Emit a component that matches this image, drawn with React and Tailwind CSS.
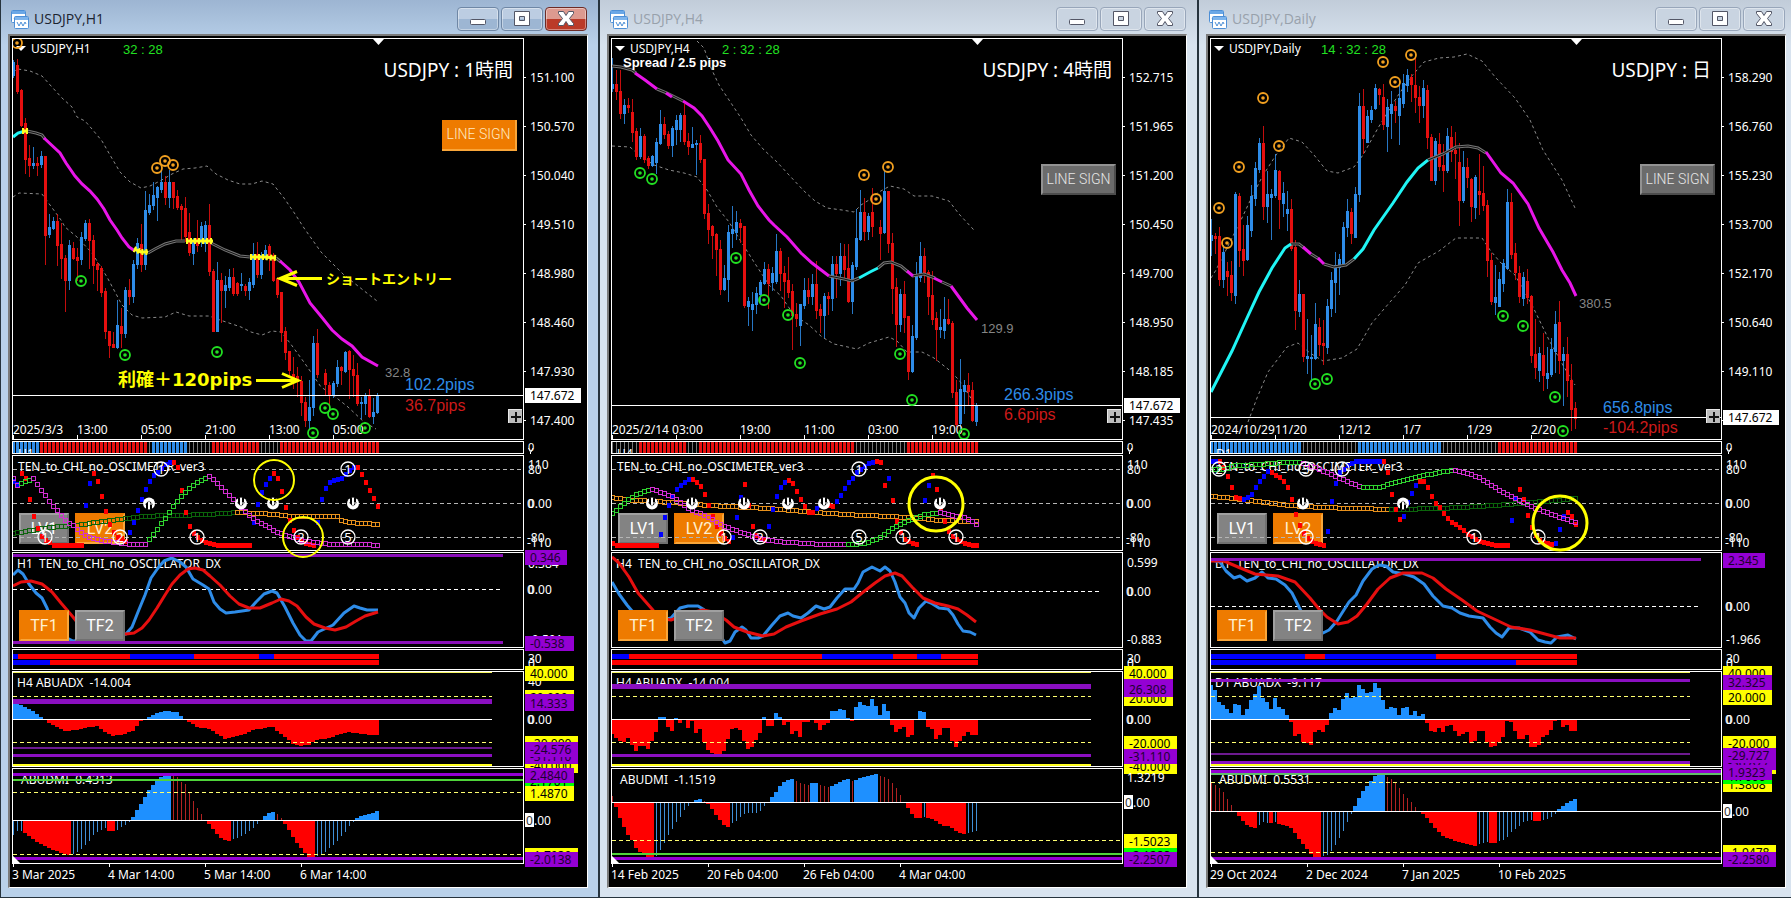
const BLUE = "#2e8ce8";
const RED = "#e60f0f";
const PURPLE = "#9400d3";
const YELLOW = "#ffff00";

const windows = [
  {
    id: "h1",
    title: "USDJPY,H1",
    active: true,
    timer: "32 : 28",
    label: "USDJPY : 1時間",
    tf: "H1",
    prices: ["151.100", "150.570", "150.040", "149.510", "148.980", "148.460", "147.930", "147.400"],
    priceY: 396,
    dates: ["2025/3/3", "13:00", "05:00", "21:00", "13:00", "05:00"],
    days: ["3 Mar 2025", "4 Mar 14:00", "5 Mar 14:00", "6 Mar 14:00"],
    ma: { text: "32.8", x: 385, y: 377 },
    pips: [
      { text: "102.2pips", y: 390 },
      { text: "36.7pips", y: 411 },
    ],
    candles: `B60,62,75,77 R59,65,91,93 R89,90,125,126 R118,123,159,173 R145,158,165,176 B147,163,165,168 R157,163,165,175 B151,156,164,167 R156,156,235,264 B214,227,234,237
      B217,221,228,229 R214,221,245,265 R223,244,258,278 R255,258,280,311 B240,245,280,289 R242,248,258,259 R248,257,260,280 B232,237,259,264 B220,223,238,240 R219,223,240,268
      R235,240,265,283 R262,264,269,290 R266,268,292,296 R288,291,331,338 R331,331,345,357 R332,344,347,347 B300,325,347,348 R308,326,333,347 B287,290,333,337 R279,290,296,304
      B260,264,296,302 B238,243,264,268 R224,244,264,271 B191,210,264,269 B194,205,212,214 B182,195,205,209 B186,187,197,220 B170,182,189,192 R176,182,197,204 B170,182,197,207
      R182,182,197,208 R190,196,207,209 R204,206,209,240 R197,208,236,241 R213,232,252,255 B238,240,253,264 R220,238,245,251 B222,226,240,246 B221,225,243,251 R204,225,271,275
      R269,271,331,331 B262,280,331,331 R273,280,290,322 B276,285,290,307 B269,277,287,290 R268,277,293,295 R282,283,293,295 B273,284,285,290 R284,286,290,295 B278,282,290,299
      B243,254,284,287 R242,254,274,277 B252,255,274,278 B245,250,257,259 R244,246,257,270 R253,255,280,281 R277,279,294,297 R292,292,332,341 R327,331,352,359 R351,351,370,377
      R357,374,382,388 R367,376,381,396 R376,381,402,415 R397,402,420,426 B380,407,420,428 B336,343,407,415 R329,343,374,377 - R369,373,384,395 R382,385,395,404
      B381,383,395,397 B360,367,383,386 R366,367,370,384 B351,352,371,372 R350,351,369,398 R355,369,375,396 R363,375,403,405 B397,402,403,418 B393,395,403,414 R389,395,416,417
      B398,412,416,423 B393,396,412,413`,
    trend: [
      ["gray", "27,131 36,133 42,135 45,139"],
      ["gray", "148,253 155,249 165,244 176,241 185,241"],
      ["gray", "211,243 225,250 240,256 250,257"],
      ["gray", "276,258 281,262"],
      ["cyan", "13,137 18,133 25,131"],
      ["magenta", "44,138 60,153 66,163 75,176 82,184 90,191 97,199 104,209 110,220 117,230 122,238 129,247 135,251"],
      ["magenta", "280,261 290,270 299,282 310,303 320,315 332,330 342,339 352,346 362,357 378,366"],
      ["spark", "22,131 28,131"],
      ["spark", "134,249 141,252 148,252"],
      ["spark", "186,241 199,241 213,241"],
      ["spark", "250,257 264,257 276,258"],
    ],
    bands: [
      "13,72 18,69 30,71 42,76 52,87 62,98 72,107 77,117 85,121 92,129 102,141 110,155 120,172 130,182 141,188 150,186 160,181 172,174 183,169 195,168 207,166 216,174 228,180 240,184 252,184 262,181 273,184 284,198 295,214 304,228 321,252 344,275 377,301",
      "13,197 19,193 42,194 50,205 61,220 65,227 77,237 92,253 107,277 122,305 132,315 142,318 165,317 176,312 189,316 209,316 220,320 241,327 251,332 262,335 272,331 281,332 290,343 306,365 321,387 333,395 348,407 364,422 376,429",
    ],
    sell: [[17, 43], [157, 168], [165, 161], [173, 165]],
    buy: [[81, 281], [125, 355], [217, 352], [313, 433], [325, 408], [333, 414], [365, 428]],
    strip: [[0, "b"], [7, "r"], [34, "g"], [35, "b"], [44, "g"], [50, "r"], [62, "g"], [67, "r"]],
    dots: `B481 B484 R473 R478 R499 R516 R528 R536 R540 R542 R545 R545 R545 R545 R545 R545 R545 R545 B505 B483
      R473 R481 R496 R511 R524 R532 R537 R538 R541 B532 B522 B510 B499 B489 B481 B475 B472 B468 B464 B462
      R462 R467 R490 R512 R526 R533 R537 R540 R542 R543 R544 R545 R545 R545 R545 R545 R545 R545 R545 R545
      B522 B504 B492 B484 B478 R473 R478 R491 R507 R520 R530 R537 R541 R543 R544 R545 B522 B499 B488 B482
      B480 B479 B478 B474 B470 B467 R467 R474 R482 R490 R498 R506`,
    fast: {
      keys: [[0, 478], [1, 485], [2, 483], [5, 478], [6, 484], [8, 495], [10, 506], [11, 510], [13, 520], [15, 525], [17, 532], [19, 537], [22, 540], [26, 542], [30, 544], [33, 544], [34, 539], [35, 534], [37, 523], [39, 512], [40, 506], [42, 496], [44, 488], [46, 482], [48, 478], [49, 476], [50, 479], [52, 487], [54, 495], [56, 503], [58, 511], [60, 518], [62, 523], [64, 527], [66, 532], [69, 536], [72, 540], [76, 542], [80, 544], [88, 544], [91, 545]],
      runs: [[0, "#d42fd4"], [2, "#2fd42f"], [5, "#d42fd4"], [34, "#2fd42f"], [49, "#d42fd4"]],
    },
    slow: {
      keys: [[0, 533], [6, 529], [11, 526], [16, 525], [22, 521], [28, 518], [32, 516], [39, 515], [49, 514], [56, 512], [66, 514], [67, 515], [71, 516], [81, 516], [82, 520], [84, 522], [88, 523], [91, 524]],
      runs: [[0, "#0b640b"], [56, "#e8911c"]],
    },
    digits: [["1", 161, 469], ["1", 348, 469], ["1", 45, 537], ["2", 120, 537], ["1", 197, 537], ["2", 301, 537], ["5", 348, 537]],
    arrows: [[149, 503, true], [241, 503], [273, 503], [353, 503]],
    rings: [[274, 480, 20, 2], [303, 537, 20, 2]],
    dx: {
      zero: 589,
      lines: [555, 642],
      blue: "13,575 18,570 23,574 29,584 36,593 42,598 47,608 52,622 57,633 73,641 96,639 126,634 132,627 138,612 145,595 151,578 158,568 164,561 172,558 180,562 186,567 193,579 203,585 209,589 214,602 220,609 226,613 235,612 249,610 256,602 264,594 272,591 277,593 285,607 293,623 300,635 306,641 311,641 318,632 333,625 344,613 354,606 360,608 367,610 378,610",
      red: "13,586 21,582 31,581 42,584 52,592 61,603 73,617 77,622 100,632 126,634 134,633 142,628 149,620 157,608 165,595 172,584 180,575 188,569 195,568 203,570 210,576 220,585 230,596 239,604 249,608 260,608 272,603 281,599 289,601 297,606 306,617 314,624 325,628 335,630 346,627 356,621 365,616 378,612",
    },
    bars1: [[13, 18, 130, 194, 259, 274, 379], "brbrbr"],
    bars2: [[13, 50, 379], "br"],
    adx: {
      text: "H4 ABUADX  -14.004",
      lines: [[701, 5], [748, 2], [755, 3]],
      keys: [[0, 15], [1, 15], [2, 14], [3, 12], [4, 10], [5, 8], [6, 5], [7, 2], [8, -1], [9, -4], [11, -8], [13, -12], [16, -11], [18, -9], [21, -7], [23, -13], [25, -17], [28, -15], [30, -12], [32, -2], [33, 0], [34, 2], [36, 6], [38, 8], [41, 7], [42, 3], [43, 0], [44, -3], [46, -8], [49, -10], [51, -15], [53, -20], [55, -18], [58, -15], [60, -11], [63, -9], [65, -8], [66, -12], [68, -18], [70, -25], [72, -27], [74, -26], [76, -21], [79, -19], [82, -15], [84, -13], [87, -15], [90, -16], [91, -16]],
    },
    dmi: {
      text: "ABUDMI  0.4313",
      zero: 820,
      lines: [[774, 3, PURPLE], [780, 2, "#4fd43a"], [858, 3, PURPLE]],
      dashed: [792, 854],
      runs: [
        ["downFade", [-15, -11, -11]],
        ["down", [-13, -16, -19, -22, -24, -26, -28, -30, -31, -33, -34, -35]],
        ["downFade", [-34, -32, -29, -25, -21, -15, -12, -10, -8]],
        ["down", [-11, -11]],
        ["downFade", [-10, -7, -5, -2]],
        ["up", [3, 10, 16, 23, 30, 35, 40, 43, 44, 45]],
        ["upFade", [45, 43, 38, 36, 27, 19, 12, 6, 0]],
        ["down", [-4, -9, -14, -18, -20, -21]],
        ["downFade", [-19, -18, -16, -14, -11, -8, -4, -1]],
        ["up", [4, 7, 8]],
        ["upFade", [6, 2]],
        ["down", [-4, -10, -17, -23, -28, -33, -37, -37]],
        ["downFade", [-36, -34, -32, -28, -25, -21, -16, -12, -6, -2]],
        ["up", [2, 4, 5, 6, 7, 9]],
      ],
    },
    axis: [
      ["plain", "0.384", 563],
      ["plain", "-0.591", 639],
      ["purple", "0.346", 557],
      ["purple", "-0.538", 643],
      ["plain", "0.00", 589],
      ["plain", "40", 681],
      ["yellow", "40.000", 673],
      ["yellow", "20.000", 697],
      ["purple", "16.000", 701],
      ["purple", "14.333", 703],
      ["plain", "0.00", 719],
      ["yellow", "-20.000", 743],
      ["yellow", "-40.000", 765],
      ["purple", "-31.110", 756],
      ["purple", "-24.576", 749],
      ["green", "2.1701", 781],
      ["purple", "2.4840", 775],
      ["yellow", "1.4870", 793],
      ["yellow", "-1.7039", 855],
      ["purple", "-2.0138", 859],
    ],
  },
  {
    id: "h4",
    title: "USDJPY,H4",
    timer: "2 : 32 : 28",
    spread: "Spread / 2.5 pips",
    label: "USDJPY : 4時間",
    tf: "H4",
    prices: ["152.715", "151.965", "151.200", "150.450", "149.700", "148.950", "148.185", "147.435"],
    priceY: 406,
    dates: ["2025/2/14 03:00", "", "19:00", "11:00", "03:00", "19:00"],
    days: ["14 Feb 2025", "20 Feb 04:00", "26 Feb 04:00", "4 Mar 04:00"],
    ma: { text: "129.9", x: 382, y: 333 },
    pips: [
      { text: "266.3pips", y: 400 },
      { text: "6.6pips", y: 420 },
    ],
    candles: `B58,84,88,91 R70,84,91,99 R70,91,113,118 B99,105,113,123 R98,105,107,112 R99,112,132,141 R128,131,156,159 B128,136,156,158 R134,136,159,162 R156,158,165,168
      B155,156,165,166 B138,142,162,173 B110,124,143,144 R117,124,134,138 R131,134,145,148 B126,128,145,156 B115,120,129,144 B113,115,129,141 R104,115,141,144 R133,141,146,154
      B127,144,147,147 B140,143,144,174 R135,143,159,162 R159,159,213,218 R204,213,229,243 R225,226,235,258 R233,234,249,275 R240,249,289,294 B265,278,289,290 B225,232,279,301
      B206,229,233,247 B211,222,232,239 R219,223,227,242 R226,226,305,307 B297,301,306,325 B292,304,309,330 B287,293,304,313 B280,282,294,302 B262,269,283,284 R264,269,283,308
      B267,273,282,290 B234,251,281,283 R248,251,273,290 R266,273,281,307 R257,280,292,297 R284,291,315,349 R303,314,318,326 B304,304,325,345 B278,290,305,308 R278,290,296,303
      B274,284,296,304 R261,284,310,318 R304,309,315,332 B293,296,315,337 R292,296,298,314 B256,264,298,310 R256,264,273,297 B243,256,273,285 R244,256,269,279 R244,268,301,302
      B262,265,301,313 B209,238,266,269 B190,212,239,240 R198,212,231,240 B213,216,231,239 R188,212,226,236 - R220,227,233,259 B171,191,232,233 R191,191,243,252
      R233,243,288,313 R278,287,324,346 B289,294,324,331 R281,294,317,332 R316,316,371,379 B325,336,371,372 B262,275,337,339 B242,256,277,281 R248,256,273,282 R270,272,296,314
      R271,295,319,324 R312,318,329,360 B309,327,329,337 B297,319,330,338 R299,319,323,324 R321,323,392,397 R380,392,424,426 B359,389,423,428 B380,385,391,413 R373,385,391,405
      R382,390,420,421 B403,405,421,425`,
    trend: [
      ["gray", "13,66 22,67 33,70 37,73"],
      ["gray", "58,89 68,93 84,101"],
      ["gray", "230,276 245,279 253,281 260,278"],
      ["gray", "279,268 285,263 292,262 302,266 309,272"],
      ["gray", "313,276 325,274 336,278"],
      ["gray", "343,282 352,286"],
      ["cyan", "260,278 271,272 279,268"],
      ["magenta", "36,73 46,80 58,89"],
      ["magenta", "67,93 73,97"],
      ["magenta", "84,101 95,108 103,116 111,128 119,141 129,160 142,174 150,190 159,206 170,220 175,225 188,237 202,253 213,263 230,276"],
      ["magenta", "308,271 314,276"],
      ["magenta", "335,278 343,282"],
      ["magenta", "352,286 360,297 368,308 378,320"],
    ],
    bands: [
      "98,41 105,48 112,68 120,85 130,100 142,118 152,135 165,150 178,162 190,175 205,191 216,201 228,208 243,210 255,212 262,205 270,200 280,192 291,186 305,189 315,196 333,196 350,201 360,214 374,229 376,232",
      "13,146 31,147 40,155 55,165 70,170 85,173 98,177 108,190 118,207 130,222 141,240 155,262 170,285 182,296 195,315 210,325 223,337 235,344 258,349 270,343 280,340 290,337 298,341 308,352 323,352 335,358 349,369 360,380 370,395 376,405",
    ],
    sell: [[265, 175], [277, 199], [289, 167]],
    buy: [[41, 173], [53, 179], [137, 258], [165, 300], [189, 315], [201, 363], [301, 354], [313, 400], [365, 434]],
    strip: [[0, "g"], [7, "r"], [19, "g"], [22, "r"], [61, "g"], [74, "r"]],
    dots: `R543 R545 R545 R545 R545 R545 R545 R545 R545 R545 R545 R545 B534 B517 B505 B496 B489 B485 B482 B479
      R479 R482 R486 R494 R505 R516 R526 R533 R538 R541 B537 B517 B497 R484 R505 R526 R535 R538 R540 B526
      B509 B496 B487 B482 R480 R483 R491 R499 R506 R512 R512 B508 B505 R504 R505 R506 B501 B495 B488 B482
      B478 B472 B469 B466 B463 B462 R461 R462 R485 B478 R500 R521 R532 R539 R541 R543 R544 - B500 B485
      R475 R489 R508 R521 R531 R536 R539 R541 R543 R544 R545 R545`,
    fast: {
      keys: [[0, 513], [2, 506], [4, 499], [6, 494], [9, 490], [10, 489], [15, 496], [19, 508], [23, 515], [28, 526], [33, 533], [37, 538], [41, 541], [48, 543], [54, 544], [59, 544], [63, 543], [67, 537], [70, 528], [74, 520], [78, 514], [81, 513], [82, 512], [85, 515], [88, 517], [90, 521], [91, 524]],
      runs: [[0, "#2fd42f"], [10, "#d42fd4"], [59, "#2fd42f"], [82, "#d42fd4"]],
    },
    slow: {
      keys: [[0, 497], [6, 500], [15, 502], [21, 504], [29, 506], [39, 508], [48, 511], [58, 514], [69, 516], [78, 518], [82, 520], [91, 521]],
      runs: [[0, "#e8911c"]],
    },
    digits: [["1", 260, 469], ["1", 125, 537], ["2", 161, 537], ["5", 260, 537], ["1", 304, 537], ["1", 357, 537]],
    arrows: [[53, 503], [93, 503], [145, 503], [189, 503], [225, 503], [341, 503]],
    rings: [[337, 504, 27, 3]],
    dx: {
      zero: 591,
      lines: [],
      blue: "13,582 20,594 28,605 33,611 41,618 56,622 72,618 81,608 89,606 99,606 104,609 114,617 121,635 126,643 131,641 136,632 143,627 147,630 152,638 159,638 164,636 173,625 181,616 189,613 194,616 202,618 209,613 217,606 225,609 231,607 238,598 246,589 255,589 259,583 264,572 273,567 281,571 286,567 291,571 296,582 301,597 306,603 310,613 315,618 320,608 327,601 332,603 340,608 349,609 354,615 359,624 364,631 371,632 377,635",
      red: "13,557 20,563 30,577 39,593 53,609 60,618 72,620 91,613 104,610 114,612 127,620 135,627 148,632 164,636 175,634 187,627 202,621 221,614 238,609 252,602 263,593 276,583 286,576 296,573 303,576 313,587 324,598 336,603 349,606 359,609 368,615 377,622",
    },
    bars1: [[13, 30, 223, 294, 318, 342, 379], "brbrbr"],
    bars2: [[13, 379], "r"],
    adx: {
      text: "H4 ABUADX  -14.004",
      lines: [[686, 5], [755, 3]],
      values: [-15, -19, -22, -23, -19, -26, -32, -27, -27, -30, -22, -13, 2, 2, -8, -12, 1, -4, 0, -9, -2, -14, -10, -23, -31, -34, -35, -35, -32, -20, -10, -9, -11, -22, -30, -28, -21, -14, 2, -7, -7, 6, 2, -6, -3, -15, -12, -18, -3, -3, -1, -4, -11, -6, -4, 8, 8, 10, 9, 1, -2, 12, 17, 14, 13, 20, 13, 4, 15, 8, -6, -13, -10, -8, -18, -16, 0, 8, 7, -8, -10, -20, -16, -9, -9, -22, -28, -22, -17, -13, -16, -16],
    },
    dmi: {
      text: "ABUDMI  -1.1519",
      zero: 802,
      lines: [[854, 2, "#4fd43a"], [858, 3, PURPLE]],
      dashed: [840],
      runs: [
        ["upFade", [6]],
        ["down", [-5, -16, -25, -33, -38, -46, -50, -53, -55, -55]],
        ["downFade", [-54, -48, -41, -33, -27, -20, -15, -8, -4]],
        ["up", [0, 2, 3]],
        ["upFade", [1]],
        ["down", [-2, -7, -13, -18, -23, -25]],
        ["downFade", [-21, -19, -15, -12, -11, -11, -11, -9, -4]],
        ["up", [0, 5, 10, 16, 20, 22, 23]],
        ["upFade", [21, 19, 18, 17]],
        ["up", [19, 19]],
        ["upFade", [17, 16, 15]],
        ["up", [16, 18, 20, 22, 23]],
        ["upFade", [21]],
        ["up", [22, 24, 25, 26, 27, 28]],
        ["upFade", [26, 25, 23, 19, 14, 7]],
        ["down", [-1, -6, -12, -16, -16]],
        ["downFade", [-15]],
        ["down", [-16, -17, -19, -22, -24, -24, -26, -29, -31, -32]],
        ["downFade", [-31, -30, -29]],
      ],
    },
    axis: [
      ["plain", "0.599", 562],
      ["plain", "0.00", 591],
      ["plain", "-0.883", 639],
      ["yellow", "40.000", 673],
      ["yellow", "20.000", 698],
      ["purple", "28.000", 686],
      ["purple", "26.308", 689],
      ["plain", "0.00", 719],
      ["yellow", "-20.000", 743],
      ["yellow", "-40.000", 766],
      ["purple", "-31.110", 756],
      ["plain", "1.3219", 777],
      ["yellow", "-1.5023", 841],
      ["green", "-2.1288", 855],
      ["purple", "-2.2507", 859],
    ],
  },
  {
    id: "d1",
    title: "USDJPY,Daily",
    timer: "14 : 32 : 28",
    label: "USDJPY : 日",
    tf: "D1",
    prices: ["158.290", "156.760", "155.230", "153.700", "152.170", "150.640", "149.110", "147.580"],
    priceY: 418,
    dates: ["2024/10/29", "11/20", "12/12", "1/7", "1/29", "2/20"],
    days: ["29 Oct 2024", "2 Dec 2024", "7 Jan 2025", "10 Feb 2025"],
    ma: { text: "380.5", x: 381, y: 308 },
    pips: [
      { text: "656.8pips", y: 413 },
      { text: "-104.2pips", y: 433 },
    ],
    candles: `B219,235,240,255 R233,236,238,253 R227,236,279,285 B245,252,279,287 R262,271,276,295 R261,275,292,300 B192,194,295,303 R193,196,250,266 R225,249,260,275 B216,225,259,260
      B185,196,230,236 B162,168,198,205 B138,143,169,172 R126,143,206,219 B171,194,206,222 B189,194,197,239 B154,170,195,197 R170,171,199,228 B182,193,203,216 B191,209,213,230
      R199,209,248,250 R240,247,310,329 B280,294,311,316 R294,294,356,361 B319,356,358,373 B335,357,358,381 B303,324,358,359 R318,327,344,355 R320,343,345,364 B299,306,347,353
      B272,280,308,316 B252,265,282,312 B254,259,267,294 B222,227,263,265 B199,211,227,236 R208,212,233,243 B187,194,237,237 B93,106,194,201 R89,106,138,153 B110,116,142,142
      B106,110,119,122 B84,88,108,109 R88,89,94,104 R84,97,124,129 B99,107,126,151 B91,104,113,138 R101,106,110,122 B85,98,115,144 B74,83,103,107 B69,75,85,91
      R74,77,84,101 R57,85,97,112 R86,97,105,122 B80,88,105,117 R85,90,137,148 R134,137,180,180 B138,141,180,184 R133,144,166,170 R144,165,170,191 B128,136,170,172
      R126,137,151,161 R132,150,153,178 R143,162,200,225 B151,167,200,202 R158,167,177,187 R178,179,206,221 B175,177,207,218 R154,191,194,214 R166,193,205,210 R200,205,260,276
      R253,260,301,304 B265,297,302,314 B272,279,306,306 B259,263,283,291 B189,202,268,269 R193,202,254,258 R243,253,272,279 R266,273,296,302 B272,277,298,305 R269,281,297,303
      R295,296,355,362 R319,354,367,378 B347,353,370,381 R333,355,375,390 B347,373,378,388 B338,349,374,376 B311,324,351,372 R301,322,360,373 B347,354,360,405 R337,354,380,396
      R364,380,409,430 R402,408,418,428`,
    trend: [
      ["gray", "93,244 101,244 106,248"],
      ["gray", "113,254 121,259"],
      ["gray", "126,264 136,267 148,265 156,259"],
      ["gray", "230,160 245,154 258,147 270,146 280,148 288,153"],
      ["cyan", "13,392 34,351 49,318 61,292 74,268 87,248 93,244"],
      ["cyan", "156,259 165,249 176,230 195,203 209,182 220,168 230,160"],
      ["magenta", "105,247 113,254"],
      ["magenta", "120,258 126,264"],
      ["magenta", "288,152 303,173 315,183 330,204 341,228 355,252 364,270 372,283 378,296"],
    ],
    bands: [
      "13,278 18,270 43,220 51,203 64,177 78,155 91,138 104,142 116,155 129,171 140,173 156,167 165,155 180,128 199,97 212,78 226,62 241,58 256,57 269,54 284,61 298,78 317,98 332,120 345,150 364,180 377,208",
      "50,422 59,398 70,372 89,347 100,343 112,353 125,361 144,358 159,349 174,323 192,302 207,285 220,263 241,251 258,238 284,238 292,250 302,262 317,275 334,305 351,340 366,367 377,385",
    ],
    sell: [[21, 208], [41, 167], [65, 98], [81, 146], [185, 62], [197, 82], [213, 55], [29, 243]],
    buy: [[117, 384], [129, 379], [305, 316], [325, 326], [357, 397], [365, 431]],
    strip: [[0, "b"], [23, "g"], [37, "b"], [58, "g"], [72, "r"]],
    dots: `B461 B461 R461 R467 R476 R487 R497 R498 B499 B497 B494 B487 B481 B476 B471 R472 R475 R477 R481 R487
      R499 R514 R525 R533 R538 R541 R543 R544 R545 B531 B501 B483 B472 B469 B465 B463 B461 B461 B461 B461
      B461 B461 B461 R461 R472 R494 R509 R519 B516 B502 B493 B485 R481 R481 R487 R496 R503 R507 R513 R518
      R522 R524 R527 R530 R534 R536 R539 R541 R542 R543 R544 R545 R545 R545 R545 B520 B498 R489 R499 R515
      R527 R535 R540 R542 R543 R544 B543 B529 B516 R512 R516 R524`,
    fast: {
      keys: [[0, 469], [3, 469], [6, 465], [12, 464], [18, 462], [22, 462], [23, 463], [26, 467], [30, 474], [34, 481], [38, 487], [42, 487], [44, 484], [48, 480], [53, 475], [57, 472], [60, 470], [61, 470], [64, 473], [67, 477], [70, 485], [74, 494], [79, 504], [83, 511], [88, 518], [91, 522]],
      runs: [[0, "#2fd42f"], [23, "#d42fd4"], [38, "#2fd42f"], [61, "#d42fd4"]],
    },
    slow: {
      keys: [[0, 496], [6, 498], [14, 502], [20, 505], [27, 507], [37, 508], [44, 509], [45, 509], [57, 508], [67, 506], [77, 503], [83, 501], [91, 498]],
      runs: [[0, "#e8911c"], [45, "#0b640b"]],
    },
    digits: [["2", 21, 469], ["5", 108, 469], ["1", 144, 469], ["1", 108, 537], ["1", 276, 537], ["1", 340, 537]],
    arrows: [[105, 503], [205, 503, true]],
    rings: [[362, 523, 27, 3]],
    dx: {
      zero: 606,
      lines: [559],
      blue: "13,560 22,562 28,571 36,578 42,576 49,581 57,578 64,572 70,578 78,579 87,585 94,593 100,605 104,613 112,627 125,633 131,630 139,621 144,613 151,602 158,595 165,581 174,569 181,565 188,566 195,572 207,574 216,577 226,584 235,596 245,606 254,608 262,613 271,616 285,618 292,627 298,633 304,637 311,628 321,628 332,632 340,640 347,642 353,643 359,637 370,635 378,639",
      red: "13,561 26,561 40,567 57,574 80,576 97,582 112,598 121,609 129,617 140,624 150,622 159,616 169,604 180,589 192,578 205,573 224,573 235,578 248,589 264,600 279,611 294,618 313,627 332,630 347,634 362,638 378,638",
    },
    bars1: [[13, 107, 127, 238, 379], "brbr"],
    bars2: [[13, 318, 379], "br"],
    adx: {
      text: "D1 ABUADX  -9.117",
      lines: [[680, 3], [754, 2], [762, 3]],
      values: [34, 29, 17, 14, 10, 6, 15, 14, 4, 10, 19, 25, 33, 21, 17, 10, 21, 12, 10, 4, -3, -17, -15, -23, -24, -26, -13, -11, -13, -6, 6, 11, 9, 20, 26, 21, 22, 34, 30, 26, 27, 36, 31, 19, 10, 12, 11, 4, 11, 12, 4, 8, 3, 5, -4, -12, -13, -9, -13, -7, -6, -12, -17, -15, -13, -24, -22, -12, -12, -23, -28, -27, -23, -18, -2, -3, -12, -20, -20, -16, -28, -28, -26, -18, -16, -11, -2, 0, -8, -6, -12, -12],
    },
    dmi: {
      text: "ABUDMI  0.5531",
      zero: 811,
      lines: [[771, 3, PURPLE], [774, 2, "#5fbf6a"], [858, 3, PURPLE]],
      dashed: [782, 852],
      runs: [
        ["upFade", [29, 26, 23, 19, 12, 6]],
        ["down", [-1, -5, -10, -14, -16, -17]],
        ["downFade", [-14, -11, -12]],
        ["down", [-12]],
        ["downFade", [-11]],
        ["down", [-13, -14, -15, -17, -22, -28, -33, -38, -43, -46, -46]],
        ["downFade", [-45, -44, -40, -34, -27, -20, -11, -3]],
        ["up", [5, 13, 20, 25, 30, 35, 37, 37]],
        ["upFade", [34, 32, 28, 23, 17, 13, 9, 4, 0]],
        ["down", [-3, -7, -12, -17, -21, -25, -27, -28, -30, -31, -32, -33, -34, -35]],
        ["downFade", [-33, -32, -31]],
        ["down", [-32, -32]],
        ["downFade", [-30, -29, -26, -21, -18, -15, -11, -10, -9]],
        ["down", [-10, -10]],
        ["downFade", [-9, -8, -6, -3]],
        ["up", [2, 5, 8, 10, 12]],
      ],
    },
    axis: [
      ["purple", "2.345", 560],
      ["plain", "0.00", 606],
      ["plain", "-1.966", 639],
      ["yellow", "40.000", 673],
      ["purple", "32.325", 682],
      ["yellow", "20.000", 697],
      ["plain", "0.00", 719],
      ["yellow", "-20.000", 743],
      ["yellow", "-40.000", 766],
      ["purple", "-36.877", 762],
      ["purple", "-29.727", 755],
      ["yellow", "1.3808", 784],
      ["green", "1.7000", 776],
      ["purple", "1.9323", 772],
      ["yellow", "-1.9478", 852],
      ["purple", "-2.2580", 859],
    ],
  },
];

const barX = (i) => 13 + 4 * i;

function interpolate(keys) {
  return Array.from({ length: 92 }, (_, i) => {
    const next = keys.findIndex(([k]) => k >= i);
    const [k1, v1] = keys[next];
    if (k1 === i) return v1;
    const [k0, v0] = keys[next - 1];
    return Math.round(v0 + ((v1 - v0) * (i - k0)) / (k1 - k0));
  });
}

const runAt = (runs, i) => runs.filter(([start]) => start <= i).pop()[1];

const parse = (text) =>
  text
    .trim()
    .split(/\s+/)
    .map((t) => (t === "-" ? null : { color: t[0] === "B" ? "up" : "down", v: t.slice(1).split(",").map(Number) }));

// Every panel draws in window coordinates, shifted so its own top edge is `top`.
function Panel({ top, className, under, over, children }) {
  return (
    <div className={`relative border border-white ${className}`}>
      {under}
      <svg className="pointer-events-none absolute inset-0 h-full w-full text-[12px]">
        <g transform={`translate(-13 ${-top - 1})`}>{children}</g>
      </svg>
      {over}
    </div>
  );
}

function HLine({ y, x2 = "120%", color = "#fff", width = 1, dash }) {
  return (
    <line x1="13" x2={x2} y1={width % 2 ? y + 0.5 : y} y2={width % 2 ? y + 0.5 : y} stroke={color} strokeWidth={width} strokeDasharray={dash} />
  );
}

function Target({ x, y, color }) {
  return (
    <g>
      <circle cx={x} cy={y} r="5" fill="none" stroke={color} strokeWidth="1.8" />
      <circle cx={x} cy={y} r="1.8" fill={color} />
    </g>
  );
}

function Trend({ kind, points }) {
  if (kind === "gray")
    return (
      <g fill="none">
        <polyline points={points} stroke="#757575" strokeWidth="3" />
        <polyline points={points} stroke="#111" strokeWidth="1" />
      </g>
    );
  if (kind === "spark")
    return (
      <g fill="none">
        <polyline points={points} stroke="#ffff20" strokeWidth="3" />
        <polyline points={points} stroke="#ffff20" strokeWidth="6" strokeDasharray="2 2" />
      </g>
    );
  return <polyline points={points} fill="none" stroke={kind === "cyan" ? "#20f5f5" : "#e815e8"} strokeWidth="3" />;
}

function PricePanel({ w }) {
  return (
    <Panel
      top={38}
      className="h-[402px]"
      over={
        <>
          <p className="absolute right-2.5 top-[15px] text-[19px] leading-8 text-white">{w.label}</p>
          <button
            className={
              w.active
                ? "absolute right-1.5 top-[81px] h-[31px] w-[75px] border-b-2 border-r-2 border-[#f9a63a] bg-[#ee7b00] font-[Roboto] text-[14px] font-light text-[#ffe9c0]"
                : "absolute right-1.5 top-[125px] h-[31px] w-[75px] border-2 border-b-[#4c4c4c] border-l-[#929292] border-r-[#4c4c4c] border-t-[#929292] bg-[#6b6b6b] font-[Roboto] text-[14px] font-light text-[#e6e6e6]"
            }
          >
            LINE SIGN
          </button>
          <button
            aria-label="Expand"
            className="absolute bottom-4 right-px flex h-3.5 w-3.5 items-center justify-center border-l border-t border-[#e8e8e8] bg-[#bdbdbd]"
          >
            <svg className="h-3 w-3" shapeRendering="crispEdges">
              <path d="M5 1h2v4h4v2H7v4H5V7H1V5h4z" fill="#111" />
            </svg>
          </button>
        </>
      }
    >
      <g fill="none" stroke="#8a8a8a" strokeDasharray="3 3">
        {w.bands.map((b) => (
          <polyline key={b} points={b} />
        ))}
      </g>
      <g shapeRendering="crispEdges">
        {parse(w.candles).map((c, i) => {
          if (!c) return null;
          const [high, top, bottom, low] = c.v;
          return (
            <g key={i} fill={c.color === "up" ? BLUE : RED}>
              <rect x={barX(i)} y={high} width="1" height={low - high + 1} opacity="0.85" />
              <rect x={barX(i) - 1} y={top} width="3" height={bottom - top + 1} />
            </g>
          );
        })}
      </g>
      {w.trend.map(([kind, points]) => (
        <Trend key={points} kind={kind} points={points} />
      ))}
      <HLine y={w.priceY - 1} />
      <g fill="#fff">
        {w.dates.map((d, i) => (
          <g key={i}>
            <rect x={13 + 64 * i} y="435" width="1" height="4" />
            <text x={13 + 64 * i} y="434">
              {d}
            </text>
          </g>
        ))}
        <path d="M16 46h10l-5 5z" />
        <path d="M373 39h11l-5.500 6z" />
        <text x="31" y="53">
          {w.title}
        </text>
      </g>
      {w.sell.map(([x, y]) => (
        <Target key={x} x={x} y={y} color="#f2a020" />
      ))}
      {w.buy.map(([x, y]) => (
        <Target key={x} x={x} y={y} color="#22e022" />
      ))}
      <text x="123" y="54" fill="#22e022" className="font-['Liberation_Sans'] text-[13px]">
        {w.timer}
      </text>
      <g className="font-['Liberation_Sans']">
        {w.spread && (
          <text x="24" y="67" fill="#fff" className="text-[13px] font-bold">
            {w.spread}
          </text>
        )}
        <text x={w.ma.x} y={w.ma.y} fill="#858585" className="text-[13px]">
          {w.ma.text}
        </text>
        <text x="405" y={w.pips[0].y} fill={BLUE} className="text-[16px]">
          {w.pips[0].text}
        </text>
        <text x="405" y={w.pips[1].y} fill="#cc1a1a" className="text-[16px]">
          {w.pips[1].text}
        </text>
      </g>
    </Panel>
  );
}

function StripPanel({ w }) {
  return (
    <Panel top={441} className="h-[13px]">
      <g shapeRendering="crispEdges">
        {Array.from({ length: 92 }, (_, i) => {
          const kind = runAt(w.strip, i);
          if (kind === "g") return <rect key={i} x={barX(i)} y="442" width="1" height="11" fill="#777" />;
          return <rect key={i} x={barX(i) - 1} y="442" width="3" height="11" fill={kind === "b" ? BLUE : RED} />;
        })}
      </g>
      <text x="18" y="458" fill="#fff">
        {w.tf}
      </text>
    </Panel>
  );
}

function HollowSeries({ keys, runs }) {
  return (
    <g fill="none" strokeWidth="1" shapeRendering="crispEdges">
      {interpolate(keys).map((y, i) => (
        <rect key={i} x={barX(i) - 1.5} y={y - 1.5} width="4" height="4" stroke={runAt(runs, i)} />
      ))}
    </g>
  );
}

function ToggleButton({ on, className, children }) {
  return (
    <button
      className={`absolute h-[31px] w-[50px] border-2 font-[Roboto] text-[16px] leading-none ${
        on
          ? "border-b-[#f9a63a] border-l-[#ee7b00] border-r-[#f9a63a] border-t-[#ee7b00] bg-[#ee7b00] text-[#fff0d0]"
          : "border-b-[#707070] border-l-[#a0a0a0] border-r-[#707070] border-t-[#a0a0a0] bg-[#838383] text-white"
      } ${className}`}
    >
      {children}
    </button>
  );
}

function MeterPanel({ w }) {
  return (
    <Panel
      top={455}
      className="h-24"
      under={
        <>
          <ToggleButton className="bottom-1.5 left-1.5">LV1</ToggleButton>
          <ToggleButton on className="bottom-1.5 left-[62px]">
            LV2
          </ToggleButton>
        </>
      }
    >
      <HLine y={469} color="#b5b5b5" dash="4 3" />
      <HLine y={503} color="#b5b5b5" dash="4 3" />
      <HLine y={537} color="#b5b5b5" dash="4 3" />
      <text x="18" y="471" fill="#fff">
        TEN_to_CHI_no_OSCIMETER_ver3
      </text>
      <HollowSeries {...w.slow} />
      <g shapeRendering="crispEdges">
        {parse(w.dots).map(
          (d, i) => d && <rect key={i} x={barX(i) - 1} y={d.v[0] - 2} width="4" height="5" fill={d.color === "up" ? "#0000ff" : "#ff0000"} />
        )}
      </g>
      <HollowSeries {...w.fast} />
      {w.digits.map(([n, x, y]) => (
        <g key={`${x}-${y}`}>
          <circle cx={x} cy={y} r="7" fill="none" stroke="#fff" strokeWidth="1.3" />
          <text x={x} y={y + 5} fill="#fff" textAnchor="middle" className="text-[13px]">
            {n}
          </text>
        </g>
      ))}
      {w.arrows.map(([x, y, up]) => (
        <g key={x} transform={`translate(${x} ${y + 0.5}) scale(1 ${up ? -1 : 1})`}>
          <circle r="6" fill="#fff" />
          <path d="M-3 -6h2v6h-2zM1 -6h2v6h-2zM-4 -1h3v2l1 2zM4 -1h-3v2l-1 2z" fill="#000" />
        </g>
      ))}
    </Panel>
  );
}

function OscillatorPanel({ w }) {
  return (
    <Panel
      top={552}
      className="h-24"
      over={
        <>
          <ToggleButton on className="bottom-1.5 left-1.5">
            TF1
          </ToggleButton>
          <ToggleButton className="bottom-1.5 left-[62px]">TF2</ToggleButton>
        </>
      }
    >
      <text x="17" y="568" fill="#fff" className="whitespace-pre">
        {w.tf + "  TEN_to_CHI_no_OSCILLATOR_DX"}
      </text>
      <HLine y={w.dx.zero} x2="503" dash="4 3" />
      <g fill="none" strokeWidth="3" strokeLinejoin="round">
        <polyline points={w.dx.blue} stroke={BLUE} />
        <polyline points={w.dx.red} stroke={RED} />
      </g>
      {w.dx.lines.map((y) => (
        <HLine key={y} y={y} x2="503" color="#8a0fb8" width={3} />
      ))}
    </Panel>
  );
}

function TrendBars({ data: [edges, colors], y }) {
  return colors.split("").map((c, i) => (
    <rect key={i} x={edges[i]} y={y} width={edges[i + 1] - edges[i]} height="5" fill={c === "b" ? "#0000ff" : "#ff0000"} />
  ));
}

function BarsPanel({ w }) {
  return (
    <Panel top={649} className="h-[21px]">
      <g shapeRendering="crispEdges">
        <TrendBars data={w.bars1} y={654} />
        <TrendBars data={w.bars2} y={660} />
      </g>
    </Panel>
  );
}

function AdxPanel({ w }) {
  const values = w.adx.values ?? interpolate(w.adx.keys);
  return (
    <Panel top={671} className="h-24">
      <text x="17" y="687" fill="#fff" className="whitespace-pre">
        {w.adx.text}
      </text>
      <g shapeRendering="crispEdges">
        {values.map((h, i) => (
          <rect key={i} x={barX(i) - 2} y={h > 0 ? 719 - h : 719} width="4" height={Math.abs(h)} fill={h > 0 ? "#1e90ff" : "#ff0000"} />
        ))}
      </g>
      <HLine y={696} x2="492" color="#ffff70" dash="4 3" />
      <HLine y={742} x2="492" color="#ffff70" dash="4 3" />
      <HLine y={719} x2="492" />
      <HLine y={672} x2="492" color="#f5f560" width={2} />
      <HLine y={765} x2="492" color="#ffff20" width={2} />
      {w.adx.lines.map(([y, width]) => (
        <HLine key={y} y={y} x2="492" color={width === 2 ? "#6d1a90" : "#8a0fc0"} width={width} />
      ))}
    </Panel>
  );
}

const histogramStyle = {
  up: { width: 4, offset: -2, fill: "#1e90ff" },
  down: { width: 4, offset: -2, fill: "#ff0000" },
  upFade: { width: 1, offset: 0, fill: "#b02222" },
  downFade: { width: 1, offset: 0, fill: "#3f8fd8" },
};

function DmiPanel({ w }) {
  const bars = w.dmi.runs.flatMap(([kind, values]) => values.map((h) => ({ h, ...histogramStyle[kind] })));
  return (
    <Panel top={768} className="h-24">
      <text x="21" y="784" fill="#fff" className="whitespace-pre">
        {w.dmi.text}
      </text>
      <g shapeRendering="crispEdges">
        {bars.map(({ h, width, offset, fill }, i) => (
          <rect key={i} x={barX(i) + offset} y={h > 0 ? w.dmi.zero - h : w.dmi.zero} width={width} height={Math.abs(h)} fill={fill} />
        ))}
      </g>
      {w.dmi.dashed.map((y) => (
        <HLine key={y} y={y} color="#ffff70" dash="4 3" />
      ))}
      <HLine y={w.dmi.zero} />
      {w.dmi.lines.map(([y, width, color]) => (
        <HLine key={y} y={y} color={color} width={width} />
      ))}
      <path d="M13 856v7h7z" fill="#fff" />
    </Panel>
  );
}

const tagFill = { purple: PURPLE, yellow: YELLOW, green: "#00ff00", white: "#ffffff" };

function AxisTag({ kind, text, y }) {
  if (kind === "plain")
    return (
      <g fill="#fff">
        <text x="528" y={y + 5}>
          {text}
        </text>
        {text === "0.00" && (
          <text x="527" y={y + 5}>
            0
          </text>
        )}
      </g>
    );
  return (
    <g>
      <rect x="525" y={y - 7} width={text.length * 7 + (text.length > 6 ? 4 : 7)} height="15" fill={tagFill[kind]} />
      <text x="530" y={y + 5} fill={kind === "purple" ? "#1c0030" : "#000"}>
        {text}
      </text>
    </g>
  );
}

function Axis({ w }) {
  return (
    <svg className="w-[63px] shrink-0 text-[12px]">
      <g transform="translate(-524 -38)">
        {w.prices.map((p, i) => (
          <g key={p} fill="#fff">
            <rect x="524" y={77 + 49 * i} width="2" height="1" />
            <text x="530" y={82 + 49 * i}>
              {p}
            </text>
          </g>
        ))}
        <rect x="525" y={w.priceY - 8} width="56" height="15" fill="#fff" />
        <text x="530" y={w.priceY + 4} fill="#000">
          147.672
        </text>
        <g fill="#fff">
          <text x="528" y="451" className="text-[11px]">
            0
          </text>
          <path d="M528.500 448l2 4v2M533 448l-2 4" fill="none" stroke="#fff" />
          <text x="528" y="469">
            110
          </text>
          <text x="528" y="474">
            80
          </text>
          <text x="528" y="508">
            0.00
          </text>
          <text x="527" y="508">
            0
          </text>
          <text x="527" y="542">
            -80
          </text>
          <text x="527" y="547">
            -110
          </text>
          <text x="528" y="663">
            30
          </text>
          <text x="528" y="668">
            0
          </text>
        </g>
        <rect x="525" y={w.dmi.zero - 7} width="9" height="14" fill="#fff" />
        <text x="526" y={w.dmi.zero + 5} fill="#333">
          0
        </text>
        <text x="534" y={w.dmi.zero + 5} fill="#fff">
          .00
        </text>
        {w.axis.map(([kind, text, y]) => (
          <AxisTag key={text + y} kind={kind} text={text} y={y} />
        ))}
      </g>
    </svg>
  );
}

function Annotations({ w }) {
  return (
    <svg className="pointer-events-none absolute inset-0 h-full w-full">
      <g transform="translate(-12 -38)" stroke={YELLOW} fill="none">
        {w.rings.map(([x, y, r, width]) => (
          <circle key={x} cx={x} cy={y} r={r} strokeWidth={width} />
        ))}
        {w.active && (
          <>
            <g strokeWidth="3">
              <path d="M322 278.500H280M297 271.500L280 278.500L297 285.500" />
              <path d="M256 380.500H298M282 373.500L298 380.500L282 387.500" />
            </g>
            <g stroke="none" fill={YELLOW} className="font-['Noto_Sans_CJK_JP'] font-bold">
              <text x="326" y="284" className="text-[14px]">
                ショートエントリー
              </text>
              <text x="118" y="386" className="text-[18px]">
                利確＋
                <tspan className="font-['DejaVu_Sans']">120pips</tspan>
              </text>
            </g>
          </>
        )}
      </g>
    </svg>
  );
}

function WindowIcon() {
  return (
    <svg className="h-[19px] w-[18px]" viewBox="0 0 18 19">
      <rect x="0.500" y="0.500" width="14" height="12" rx="1" fill="#fff" stroke="#4d8fd6" />
      <rect x="1" y="1" width="13" height="3" fill="#6aa7e6" />
      <path d="M3 9l2-3 1 3 2-2 2 1" fill="none" stroke="#4d8fd6" />
      <rect x="3.500" y="6.500" width="14" height="12" rx="1" fill="#fff" stroke="#4d8fd6" />
      <rect x="4" y="7" width="13" height="3" fill="#7db4ec" />
      <path d="M6 12l2 4 2-4 2 4 2-4 1 2" fill="none" stroke="#4d8fd6" />
    </svg>
  );
}

function CaptionButton({ label, className, children }) {
  return (
    <button aria-label={label} className={`flex h-6 w-[42px] items-center justify-center rounded-sm border shadow-[inset_0_0_0_1px_rgba(255,255,255,0.4)] ${className}`}>
      <svg className="h-5 w-5" viewBox="0 0 20 20">
        {children}
      </svg>
    </button>
  );
}

function TitleBar({ w }) {
  const plain = w.active
    ? "border-[#6f87a5] bg-linear-to-b from-[#bccde2] from-50% to-[#9db6d3] to-50%"
    : "border-[#98a6ba] bg-[#c9d4e1]";
  return (
    <header className="flex h-[34px] items-start justify-between pl-[10px] pr-[11px]">
      <div className="flex items-center gap-[5px] pt-[9px]">
        <WindowIcon />
        <h2 className={`font-['Open_Sans'] text-[14px] leading-5 ${w.active ? "text-[#1b2430]" : "text-[#98a1ab]"}`}>{w.title}</h2>
      </div>
      <div className="flex gap-0.5 pt-[7px]">
        <CaptionButton label="Minimize" className={plain}>
          <rect x="2.500" y="10.500" width="15" height="5" rx="1" fill="#fff" stroke="#535666" />
        </CaptionButton>
        <CaptionButton label="Maximize" className={plain}>
          <path d="M2.500 2.500h15v14h-15zM7.500 7.500v4h5v-4z" fill="#fff" fillRule="evenodd" stroke="#535666" />
        </CaptionButton>
        <CaptionButton
          label="Close"
          className={w.active ? "border-[#6d2b26] bg-linear-to-b from-[#dd9a90] from-50% to-[#bb3a28] to-50%" : plain}
        >
          <path d="M2.500 2.500h5l2.500 4 2.500-4h5v2l-4 5 4 5v2h-5l-2.500-4-2.500 4h-5v-2l4-5-4-5z" fill="#fff" stroke="#535666" />
        </CaptionButton>
      </div>
    </header>
  );
}

function ChartWindow({ w }) {
  return (
    <section
      className={`mx-px mb-px flex min-w-0 flex-col bg-linear-to-b ${
        w.active ? "from-[#9db5d2] to-[#b9d1ea] to-5%" : "from-[#c1ccd9] to-[#d8e3ef] to-5%"
      }`}
    >
      <TitleBar w={w} />
      <div className="mb-[9px] ml-[7px] mr-[10px] flex border-b border-l-2 border-r border-t-2 border-b-white border-l-[#7b7b7b] border-r-white border-t-[#7b7b7b] bg-black pl-0.5 pt-0.5 font-['Noto_Sans','Noto_Sans_CJK_JP',sans-serif]">
        <div className="relative flex min-w-0 flex-1 flex-col">
          <div className="flex flex-col gap-px">
            <PricePanel w={w} />
            <StripPanel w={w} />
            <MeterPanel w={w} />
            <OscillatorPanel w={w} />
            <BarsPanel w={w} />
            <AdxPanel w={w} />
            <DmiPanel w={w} />
          </div>
          <div className="flex h-[23px] text-[12px] leading-4 text-white">
            {w.days.map((d) => (
              <span key={d} className="w-24 whitespace-nowrap before:block before:h-[3px] before:w-0.5 before:border-r before:border-white">
                {d}
              </span>
            ))}
          </div>
          <Annotations w={w} />
        </div>
        <Axis w={w} />
      </div>
    </section>
  );
}

export default function App() {
  return (
    <main className="overflow-hidden bg-[#26333d]">
      <div className="grid w-[calc(100%+6px)] grid-cols-3">
        {windows.map((w) => (
          <ChartWindow key={w.id} w={w} />
        ))}
      </div>
    </main>
  );
}
